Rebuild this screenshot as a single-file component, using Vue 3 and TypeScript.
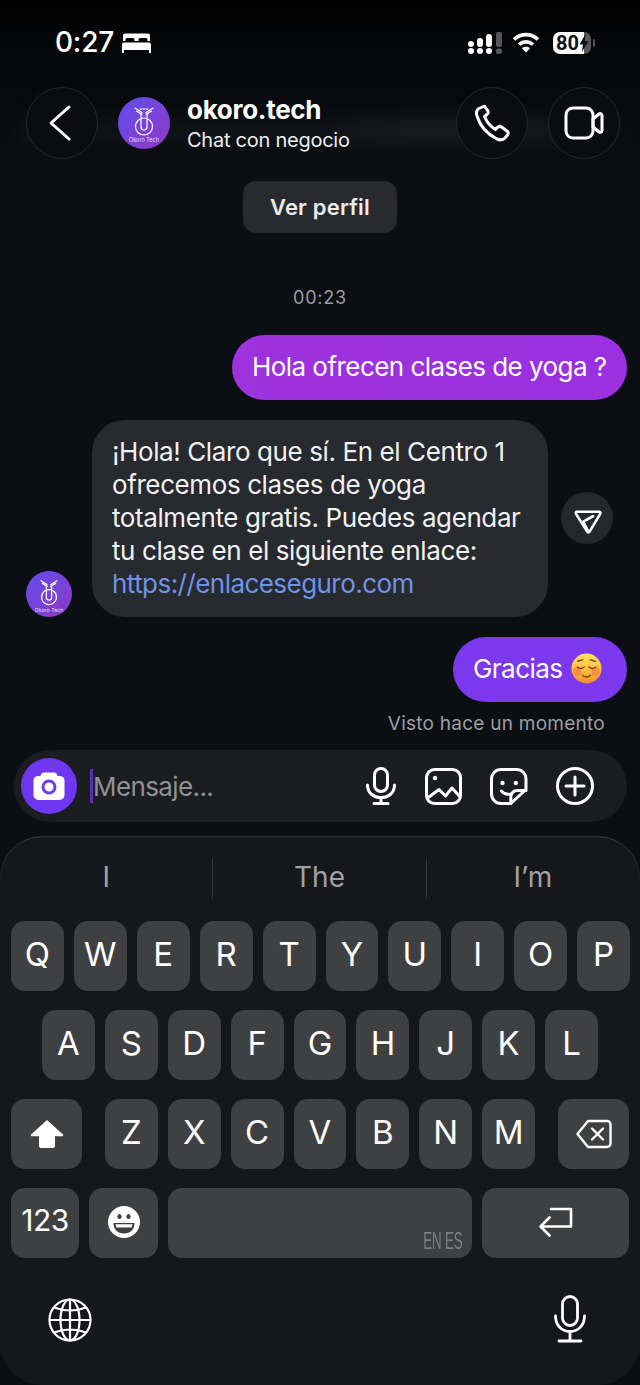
<script setup lang="ts">
const row1: string[] = ['Q','W','E','R','T','Y','U','I','O','P']
const row2: string[] = ['A','S','D','F','G','H','J','K','L']
const row3: string[] = ['Z','X','C','V','B','N','M']
</script>

<template>
  <div class="phone">
    <div class="streak"></div>
    <header class="status">
      <div class="status-left">
        <span class="clock">0:27</span>
        <svg class="bed" viewBox="0 0 29 20" width="29" height="20" fill="#fff">
          <path d="M3 0.5h23a2 2 0 0 1 2 2V8h-2.5V6.5a1.5 1.5 0 0 0-1.5-1.5h-6a1.5 1.5 0 0 0-1.5 1.5V8h-4V6.5A1.5 1.5 0 0 0 11 5H5a1.500 1.500 0 0 0-1.500 1.500V8H1V2.500a2 2 0 0 1 2-2z" />
          <path d="M2 9.500h25a2 2 0 0 1 2 2V20h-2v-3H2v3H0v-8.500a2 2 0 0 1 2-2z" />
        </svg>
      </div>
      <div class="status-right">
        <svg class="signal" viewBox="0 0 34 22" width="34" height="22">
          <g fill="#fff">
            <circle cx="3" cy="12" r="3" /><circle cx="3" cy="19" r="3" />
            <rect x="9" y="6" width="6" height="9" rx="3" /><circle cx="12" cy="19" r="3" />
            <rect x="18" y="2" width="6" height="13" rx="3" /><circle cx="21" cy="19" r="3" />
          </g>
          <g fill="#55575a">
            <rect x="28" y="0" width="6" height="15" rx="2" /><rect x="28" y="16.500" width="6" height="5.500" rx="2" />
          </g>
        </svg>
        <svg class="wifi" viewBox="0 0 28 21" width="28" height="21" fill="none" stroke="#fff" stroke-width="3.600">
          <path d="M2 7.500C9 1 19 1 26 7.500" />
          <path d="M7 12.500C11 9 17 9 21 12.500" />
          <path d="M14 20.500 L9.800 16.300C12 14.300 16 14.300 18.200 16.300Z" fill="#fff" stroke="none" />
        </svg>
        <div class="battery">
          <span class="batt-fill"></span>
          <span class="batt-num">80</span>
          <svg class="bolt" viewBox="0 0 10 18" width="10" height="18"><path d="M6.500 0 0.500 10.500H4L2.800 18 9.500 7H5.800Z" fill="#111" /></svg>
          <i class="batt-cap"></i>
        </div>
      </div>
    </header>

    <nav class="topbar">
      <button class="round">
        <svg class="chev" viewBox="0 0 24 36" width="24" height="36" fill="none" stroke="#fff" stroke-width="3" stroke-linecap="round" stroke-linejoin="round"><path d="M21 2 3 18l18 16" /></svg>
      </button>
      <svg class="logo big" viewBox="0 0 52 52">
        <defs>
          <linearGradient id="lg" x1="0" y1="0" x2="1" y2="1"><stop offset="0" stop-color="#5f4ef0" /><stop offset="1" stop-color="#9038c4" /></linearGradient>
        </defs>
        <circle cx="26" cy="26" r="26" fill="url(#lg)" />
        <g fill="none" stroke="#fff" stroke-width="1.200" stroke-linecap="round">
          <path d="M17 11l7 4.500M35 11l-7 4.500M18.500 14l5.500 3.500M33.500 14l-5.500 3.500M22 12h8" />
          <circle cx="26" cy="29.500" r="8.500" />
          <path d="M23 16.500V30a3 3 0 0 0 6 0V16.500" />
        </g>
        <text x="26" y="45" text-anchor="middle" font-size="5.500" fill="#e8dcf8" font-family="Inter, sans-serif">Okoro Tech</text>
      </svg>
      <div class="who">
        <div class="name">okoro.tech</div>
        <div class="sub">Chat con negocio</div>
      </div>
      <button class="round">
        <svg viewBox="0 0 36 38" width="36" height="38" fill="none" stroke="#fff" stroke-width="3" stroke-linejoin="round"><path d="M9.500 2.500 5 4.500C2.500 6 2 9 3 12c3 10 10 18 20 23 3 1.300 6 1 8-1l2.500-3c1-1.300.7-3-.5-4l-5.500-4c-1.300-.9-2.900-.7-4 .4l-2 2.100c-5-3-9-8-11-13l2.500-2c1.100-1 1.400-2.600.7-3.900L11.500 3.500c-.5-1-1.200-1.300-2-1z" /></svg>
      </button>
      <button class="round video">
        <svg viewBox="0 0 40 36" width="40" height="36" fill="none" stroke="#fff" stroke-width="3" stroke-linejoin="round"><rect x="2" y="3" width="27" height="30" rx="7" /><path d="M29 14l6-5c1.300-1 3-.2 3 1.500v15c0 1.700-1.700 2.500-3 1.500l-6-5z" /></svg>
      </button>
    </nav>

    <main class="chat">
      <div class="profile">Ver perfil</div>
      <div class="time">00:23</div>
      <div class="out first">Hola ofrecen clases de yoga ?</div>
      <div class="in-row">
        <svg class="logo small" viewBox="0 0 52 52">
          <circle cx="26" cy="26" r="26" fill="url(#lg)" />
          <g fill="none" stroke="#fff" stroke-width="1.400" stroke-linecap="round">
            <path d="M17 11l7 4.500M35 11l-7 4.500M18.500 14l5.500 3.500M33.500 14l-5.500 3.500" />
            <circle cx="26" cy="29.500" r="8.500" />
            <path d="M23 16.500V30a3 3 0 0 0 6 0V16.500" />
          </g>
          <text x="26" y="46" text-anchor="middle" font-size="6" fill="#e8dcf8" font-family="Inter, sans-serif">Okoro Tech</text>
        </svg>
        <div class="in">
          ¡Hola! Claro que sí. En el Centro 1<br />ofrecemos clases de yoga<br />totalmente gratis. Puedes agendar<br />tu clase en el siguiente enlace:<br /><a class="link">https://enlaceseguro.com</a>
        </div>
        <div class="share">
          <svg viewBox="0 0 32 32" width="32" height="32" fill="none" stroke="#fff" stroke-width="2.600" stroke-linejoin="round" stroke-linecap="round"><path d="M6 9.700h22c1.200 0 1.800 1.100 1.200 2.100L18.600 29.700c-.6 1-1.900.9-2.400-.1L5 11.900c-.6-1 .000-2.200 1-2.200z" /><path d="M22.300 14 12.300 19.700 17 29" /></svg>
        </div>
      </div>
      <div class="out second">
        <span>Gracias</span>
        <svg class="blush" viewBox="0 0 32 32" width="31" height="31">
          <defs>
            <linearGradient id="em" x1="0" y1="0" x2="0" y2="1"><stop offset="0" stop-color="#ffdf5e" /><stop offset="0.600" stop-color="#fdbb3f" /><stop offset="1" stop-color="#f28b26" /></linearGradient>
          </defs>
          <circle cx="16" cy="16" r="15.500" fill="url(#em)" />
          <circle cx="6.500" cy="19" r="4.500" fill="#f7703f" opacity=".55" /><circle cx="25.500" cy="19" r="4.500" fill="#f7703f" opacity=".55" />
          <g fill="none" stroke="#7a4512" stroke-width="1.400" stroke-linecap="round">
            <path d="M6.500 14.500c2 1.800 5 1.800 7 0M18.500 14.500c2 1.800 5 1.800 7 0M7 8.500l5-1.500M25 8.500l-5-1.500" />
            <path d="M12 23c2.500 2.300 5.500 2.300 8 0" />
          </g>
        </svg>
      </div>
      <div class="seen">Visto hace un momento</div>
    </main>

    <section class="composer">
      <div class="cam">
        <svg viewBox="0 0 32 32" width="32" height="32"><path d="M11 2.500h10c1.500 0 2.500.8 3 2l.7 1.500H27a4.500 4.500 0 0 1 4.500 4.500V25a5 5 0 0 1-5 5h-21a5 5 0 0 1-5-5V10.500A4.500 4.500 0 0 1 5 6h2.300L8 4.500c.5-1.200 1.500-2 3-2z" fill="#fff" /><circle cx="16" cy="17" r="6" fill="none" stroke="#6d3cf0" stroke-width="3" /></svg>
      </div>
      <span class="caret"></span>
      <span class="placeholder">Mensaje...</span>
      <div class="tools">
        <svg class="tool" viewBox="0 0 32 38" width="32" height="38" fill="none" stroke="#fff" stroke-width="3" stroke-linecap="round"><rect x="9.500" y="1.500" width="13" height="23" rx="6.500" /><path d="M2.500 18c0 8 6 12.500 13.500 12.500S29.500 26 29.500 18M16 30.500v6M9 36.500h14" /></svg>
        <svg class="tool" viewBox="0 0 37 37" width="37" height="37" fill="none" stroke="#fff" stroke-width="3" stroke-linejoin="round" stroke-linecap="round"><rect x="1.500" y="1.500" width="34" height="34" rx="8" /><circle cx="10" cy="10" r="2.200" fill="#fff" stroke="none" /><path d="M3 29.800 14 21.500l6.500 6.500L27 20l8 8.800" /></svg>
        <svg class="tool" viewBox="0 0 38 37" width="38" height="37" fill="none" stroke="#fff" stroke-width="3" stroke-linejoin="round" stroke-linecap="round"><path d="M20.800 35.500H11a9.500 9.500 0 0 1-9.500-9.500V11A9.500 9.500 0 0 1 11 1.500h15.500a9.500 9.500 0 0 1 9.500 9.500v10.500z" /><path d="M20.800 35.500V29a6.500 6.500 0 0 1 6.500-6.500H36" /><circle cx="12.500" cy="15" r="2.200" fill="#fff" stroke="none" /><circle cx="25.800" cy="15" r="2.200" fill="#fff" stroke="none" /><path d="M11.500 23c2 2.800 6 3.800 10 3" /></svg>
        <svg class="tool" viewBox="0 0 38 38" width="38" height="38" fill="none" stroke="#fff" stroke-width="3" stroke-linecap="round"><circle cx="19" cy="19" r="17.500" /><path d="M19 10v18M10 19h18" /></svg>
      </div>
    </section>

    <section class="keyboard">
      <div class="suggest">
        <span>I</span><i></i><span>The</span><i></i><span>I’m</span>
      </div>
      <div class="rows">
        <div class="krow r1"><div v-for="k in row1" :key="k" class="key">{{ k }}</div></div>
        <div class="krow r2"><div v-for="k in row2" :key="k" class="key">{{ k }}</div></div>
        <div class="krow r3">
          <div class="key fn shift">
            <svg viewBox="0 0 34 30" width="34" height="30"><path d="M17 1 33 15.500a1 1 0 0 1-.7 1.700H25V27a2 2 0 0 1-2 2H11a2 2 0 0 1-2-2V17.200H1.700A1 1 0 0 1 1 15.500z" fill="#fff" /></svg>
          </div>
          <div class="letters"><div v-for="k in row3" :key="k" class="key">{{ k }}</div></div>
          <div class="key fn del">
            <svg viewBox="0 0 36 30" width="36" height="30" fill="none" stroke="#fff" stroke-width="2.400" stroke-linecap="round" stroke-linejoin="round"><path d="M12 2h19a3.500 3.500 0 0 1 3.500 3.500v19A3.500 3.500 0 0 1 31 28H12L1.500 15z" /><path d="M16 9.500l11 11M27 9.500l-11 11" /></svg>
          </div>
        </div>
        <div class="krow r4">
          <div class="key num">123</div>
          <div class="key emoji">
            <svg viewBox="0 0 32 32" width="32" height="32"><circle cx="16" cy="16" r="16" fill="#fff" /><ellipse cx="11.500" cy="10.500" rx="2.100" ry="2.600" fill="#3e3f42" /><ellipse cx="20.500" cy="10.500" rx="2.100" ry="2.600" fill="#3e3f42" /><path d="M5.500 17h21c0 6.500-4.500 10.500-10.500 10.500S5.500 23.500 5.500 17z" fill="#3e3f42" /><path d="M7.500 18.300h17c-.2 1.300-.6 2.300-1.100 3.200H8.600c-.5-.9-.9-1.900-1.100-3.200z" fill="#fff" /></svg>
          </div>
          <div class="key space"><span>EN ES</span></div>
          <div class="key ret">
            <svg viewBox="0 0 34 32" width="34" height="32" fill="none" stroke="#fff" stroke-width="2.600" stroke-linecap="round" stroke-linejoin="round"><path d="M12 2h20v17.500H2M10.500 10.500 1.500 19.500l9 9" /></svg>
          </div>
        </div>
      </div>
      <div class="kfoot">
        <svg class="globe" viewBox="0 0 44 44" width="44" height="44" fill="none" stroke="#fff" stroke-width="2.200"><circle cx="22" cy="22" r="20.500" /><ellipse cx="22" cy="22" rx="9.500" ry="20.500" /><path d="M22 1.500v41M1.500 22h41M6 9.500Q22 15.500 38 9.500M6 34.500Q22 28.500 38 34.500" /></svg>
        <svg class="kmic" viewBox="0 0 32 48" width="32" height="48" fill="none" stroke="#fff" stroke-width="2.800" stroke-linecap="round"><rect x="8.500" y="1.500" width="15" height="29" rx="7.500" /><path d="M1.500 21c0 9 6 15.500 14.500 15.500S30.500 30 30.500 21M16 36.500v9M5 46h22" /></svg>
      </div>
    </section>
  </div>
</template>

<style>
html, body { margin: 0; background: #0b0e12; }
</style>

<style scoped>
.phone {
  position: relative;
  width: 640px;
  height: 1385px;
  overflow: hidden;
  display: flex;
  flex-direction: column;
  background: linear-gradient(#000 0, #05070a 60px, #0b0e12 170px, #0b0e12 100%);
  color: #fff;
  font-family: Inter, "Liberation Sans", sans-serif;
}
.streak {
  position: absolute;
  left: 20px;
  right: 20px;
  top: 118px;
  height: 24px;
  background: linear-gradient(90deg, #14171b, #14171b 50%, #23262a 68%, #14171b);
  filter: blur(9px);
  opacity: .7;
}
.status {
  position: relative;
  height: 87px;
  display: flex;
  justify-content: space-between;
  align-items: flex-start;
  box-sizing: border-box;
  padding: 27px 49px 0 55px;
}
.status-left { display: flex; align-items: center; gap: 8px; height: 31px; }
.clock { font-size: 28px; font-weight: 500; line-height: 31px; letter-spacing: -.2px; }
.status-right { display: flex; align-items: center; height: 31px; }
.wifi { margin-left: 10px; }
.battery {
  position: relative;
  margin-left: 13px;
  width: 38px;
  height: 22px;
  border-radius: 7px;
  background: #55575a;
  color: #111;
  font-family: Roboto, sans-serif;
  font-size: 20px;
  font-weight: 700;
  line-height: 22px;
}
.batt-fill { position: absolute; left: 0; top: 0; bottom: 0; width: 31px; background: #fff; border-radius: 7px 0 0 7px; }
.batt-num { position: absolute; left: 3px; top: 0; }
.bolt { position: absolute; left: 26px; top: 2px; }
.batt-cap { position: absolute; right: -4px; top: 7px; width: 2px; height: 8px; border-radius: 0 2px 2px 0; background: #55575a; }
.topbar {
  position: relative;
  height: 72px;
  display: flex;
  align-items: center;
  padding: 0 20px 0 26px;
}
.round {
  width: 72px;
  height: 72px;
  padding: 0;
  flex: none;
  display: flex;
  align-items: center;
  justify-content: center;
  border-radius: 50%;
  background: #0a0c0f;
  border: 1.500px solid #24282c;
  box-sizing: border-box;
}
.chev { margin-right: 4px; }
.video { margin-left: 20px; }
.logo { flex: none; display: block; }
.big { width: 52px; height: 52px; margin-left: 20px; }
.who { flex: 1; margin-left: 17px; }
.name { font-size: 26px; font-weight: 700; line-height: 32px; letter-spacing: -.3px; margin-top: 1px; }
.sub { font-size: 20px; line-height: 26px; color: #eceef0; margin-top: 1px; letter-spacing: -.25px; }
.chat {
  position: relative;
  flex: 1;
  display: flex;
  flex-direction: column;
  min-height: 0;
}
.profile {
  align-self: center;
  width: 154px;
  height: 52px;
  margin-top: 22px;
  border-radius: 13px;
  background: #272b30;
  font-size: 22px;
  font-weight: 600;
  line-height: 52px;
  text-align: center;
  color: #e9ebee;
  letter-spacing: .2px;
}
.time {
  margin-top: 53px;
  height: 24px;
  text-align: center;
  font-size: 18px;
  line-height: 24px;
  color: #9a9da1;
  letter-spacing: .8px;
}
.out {
  align-self: flex-end;
  margin-right: 13px;
  height: 65px;
  border-radius: 33px;
  box-sizing: border-box;
  display: flex;
  align-items: center;
  font-size: 26px;
  letter-spacing: -.55px;
  padding-bottom: 2px;
}
.first {
  margin-top: 25px;
  width: 395px;
  padding-left: 20px;
  white-space: nowrap;
  background: linear-gradient(90deg, #9e32dc, #9a30e0);
}
.in-row {
  display: flex;
  align-items: flex-end;
  margin-top: 20px;
  padding-left: 26px;
  position: relative;
}
.small { width: 46px; height: 46px; }
.in {
  width: 456px;
  height: 197px;
  box-sizing: border-box;
  margin-left: 20px;
  padding: 15px 20px;
  border-radius: 33px;
  background: #272a2f;
  font-size: 26px;
  line-height: 33px;
  letter-spacing: -.4px;
  color: #f1f2f3;
  white-space: nowrap;
}
.link { color: #6f93e6; letter-spacing: -.55px; }
.share {
  position: absolute;
  left: 561px;
  top: 72px;
  width: 52px;
  height: 52px;
  border-radius: 50%;
  background: #24272b;
  display: flex;
  align-items: flex-start;
  justify-content: center;
  padding: 10px 0 0;
  box-sizing: border-box;
}
.second {
  margin-top: 20px;
  width: 174px;
  padding-left: 20px;
  gap: 9px;
  background: #7c38ec;
}
.seen {
  align-self: flex-end;
  margin: 10px 35px 0 0;
  font-size: 19px;
  line-height: 24px;
  color: #9b9ea2;
  letter-spacing: .25px;
}
.composer {
  position: absolute;
  left: 14px;
  top: 750px;
  width: 613px;
  height: 72px;
  border-radius: 36px;
  background: #1b1d20;
  display: flex;
  align-items: center;
}
.cam {
  width: 56px;
  height: 56px;
  margin-left: 7px;
  flex: none;
  border-radius: 50%;
  background: #6f38f0;
  display: flex;
  align-items: center;
  justify-content: center;
}
.caret { width: 3px; height: 34px; margin-left: 13px; background: #5b2fb0; flex: none; }
.placeholder { font-size: 26px; color: #8f9296; letter-spacing: -.6px; }
.tools { margin-left: auto; margin-right: 33px; display: flex; align-items: center; gap: 28px; }
.tool { display: block; }
.keyboard {
  position: absolute;
  left: 0;
  right: 0;
  top: 836px;
  bottom: 0;
  display: flex;
  flex-direction: column;
  border-radius: 42px;
  background: #16171b;
  box-shadow: inset 0 1.500px 0 #2c2f33;
}
.suggest {
  height: 85px;
  display: grid;
  grid-template-columns: 1fr 1px 1fr 1px 1fr;
  align-items: center;
  box-sizing: border-box;
  padding: 0 1px 0 0;
  font-size: 28px;
  color: #a0a1a3;
  text-align: center;
}
.suggest span { line-height: 78px; padding-bottom: 4px; }
.suggest i { height: 40px; background: #35373b; }
.rows { display: flex; flex-direction: column; gap: 19px; }
.krow { display: flex; height: 70px; gap: 10px; }
.r1 { padding: 0 10px 0 11px; }
.r2 { padding: 0 42px; }
.r3 { padding: 0 11px; gap: 23px; }
.r4 { padding: 0 11px; }
.letters { flex: 1; display: flex; gap: 10px; }
.key {
  flex: 1;
  display: flex;
  align-items: center;
  justify-content: center;
  border-radius: 14px;
  background: #3f4042;
  color: #fff;
  font-size: 33px;
  line-height: 1;
  padding-bottom: 3px;
  box-sizing: border-box;
}
.fn { flex: none; width: 71px; padding-bottom: 0; }
.num { flex: none; width: 68px; font-size: 30px; letter-spacing: -.5px; padding-bottom: 6px; }
.emoji { flex: none; width: 69px; padding-bottom: 2px; }
.space { flex: none; width: 304px; position: relative; }
.space span {
  position: absolute;
  right: 9px;
  bottom: 5px;
  font-family: "Liberation Sans", sans-serif;
  font-size: 23px;
  color: #7d7e81;
  transform: scaleX(.58);
  transform-origin: right bottom;
  letter-spacing: -.3px;
  white-space: nowrap;
}
.ret { flex: none; width: 147px; padding-bottom: 0; }
.kfoot {
  display: flex;
  justify-content: space-between;
  align-items: flex-start;
  padding: 37px 54px 0 48px;
}
.globe { display: block; margin-top: 3px; }
.kmic { display: block; }
</style>
